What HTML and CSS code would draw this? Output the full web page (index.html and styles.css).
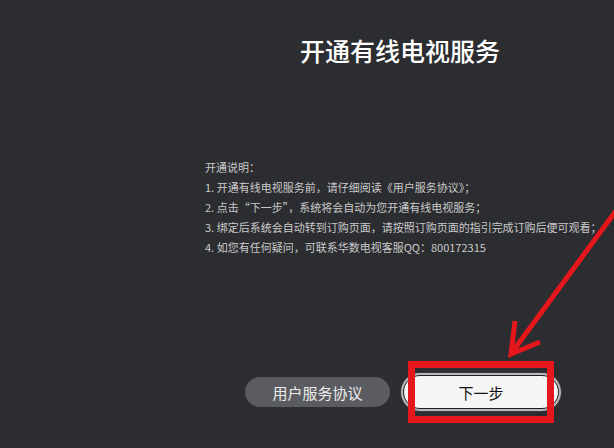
FILE: index.html
```html
<!DOCTYPE html>
<html lang="zh-CN">
<head>
  <meta charset="utf-8">
  <title>开通有线电视服务</title>
  <link rel="stylesheet" href="styles.css">
</head>
<body>
  <div id="screen">
    <div id="panel">
      <h1 class="title">开通有线电视服务</h1>

      <div class="notes">
        <p>开通说明：</p>
        <p>1. 开通有线电视服务前，请仔细阅读《用户服务协议》；</p>
        <p>2. 点击“下一步”，系统将会自动为您开通有线电视服务；</p>
        <p>3. 绑定后系统会自动转到订购页面，请按照订购页面的指引完成订购后便可观看；</p>
        <p>4. 如您有任何疑问，可联系华数电视客服QQ：800172315</p>
      </div>

      <div class="actions">
        <button class="btn btn-dark">用户服务协议</button>
        <button class="btn btn-light">下一步</button>
      </div>
    </div>

    <!-- annotation: red box + arrow drawn over the screenshot -->
    <div class="mark-box"></div>
    <svg class="mark-arrow" width="614" height="448" viewBox="0 0 614 448">
      <line x1="618" y1="208" x2="513" y2="351" stroke="#e5161c" stroke-width="5"/>
      <path d="M515 321 L511 354 L540 342" fill="none" stroke="#e5161c" stroke-width="5" stroke-linejoin="miter"/>
    </svg>
  </div>
</body>
</html>
```

FILE: styles.css
```css
html, body {
  margin: 0;
  padding: 0;
}
body {
  background: #2c2d31;
  font-family: "Noto Sans CJK SC", "Noto Sans", sans-serif;
}
#screen {
  position: relative;
  width: 614px;
  height: 448px;
  overflow: hidden;
}
#panel {
  width: 400px;
  margin-left: 200px;
  display: flex;
  flex-direction: column;
}
.title {
  margin: 34px 0 0;
  font-size: 25px;
  line-height: 32px;
  font-weight: 500;
  color: #ffffff;
  text-align: center;
}
.notes {
  margin-top: 91px;
  padding-left: 5px;
  color: #cacaca;
  font-size: 11px;
  line-height: 20px;
  white-space: nowrap;
}
.notes p {
  margin: 0;
}
.actions {
  margin-top: 118px;
  display: flex;
  align-items: center;
  padding-left: 45px;
  gap: 13px;
}
.btn {
  font-family: inherit;
  font-size: 15px;
  border-radius: 18px;
  cursor: pointer;
}
.btn-dark {
  width: 145px;
  height: 30px;
  border: 0;
  background: #5b5c61;
  color: #ececec;
}
.btn-light {
  width: 156px;
  height: 34px;
  border: 1px solid #1e1e20;
  background: #f5f5f5;
  color: #111;
  box-shadow: 0 0 0 2px #b9b9b9, 0 0 0 3px #3a3a3d;
}
.mark-box {
  position: absolute;
  left: 408px;
  top: 361px;
  width: 132px;
  height: 48px;
  border: 7px solid #e5161c;
}
.mark-arrow {
  position: absolute;
  left: 0;
  top: 0;
}
```
